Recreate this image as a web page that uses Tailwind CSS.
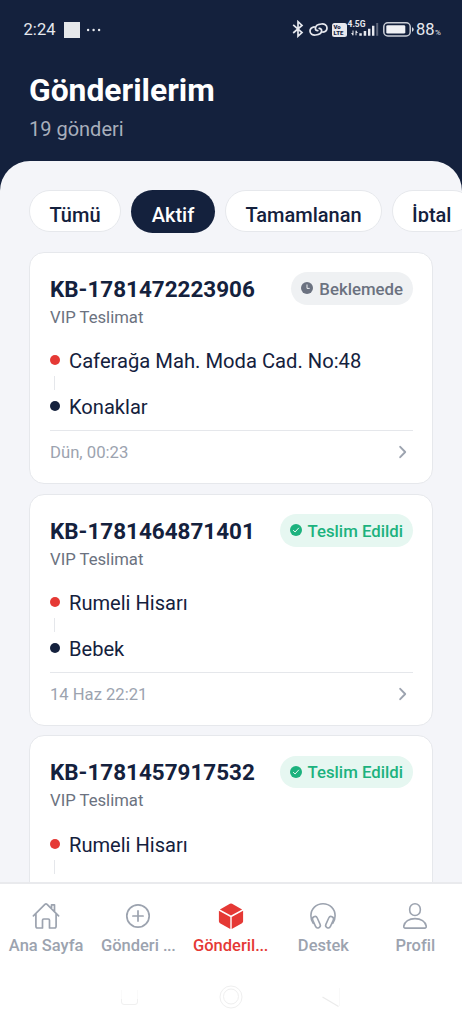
<!DOCTYPE html>
<html lang="tr">
<head>
<meta charset="utf-8">
<title>Gönderilerim</title>
<script src="https://cdn.jsdelivr.net/npm/@tailwindcss/browser@4"></script>
</head>
<body class="w-[462px] h-[1024px] overflow-hidden bg-[#14213d] font-['Roboto',sans-serif] text-[#14213d] flex flex-col">
<svg class="hidden">
  <symbol id="chev" viewBox="0 0 10 14"><path d="M2.200 1.800 7.200 7 2.200 12.200" fill="none" stroke="#9ca3af" stroke-width="1.9" stroke-linecap="round" stroke-linejoin="round"/></symbol>
  <symbol id="check" viewBox="0 0 12 12"><circle cx="6" cy="6" r="6" fill="#1cb27e"/><path d="M3.4 6.4 5.1 8 8.6 4.1" fill="none" stroke="#e6f7f1" stroke-width="1" stroke-linecap="round" stroke-linejoin="round"/></symbol>
</svg>

<header class="h-[161px] shrink-0 flex flex-col">
  <div class="h-[60px] pl-[23.500px] pr-[21px] flex items-center justify-between text-[#e6e8ee]">
    <div class="flex items-center">
      <span class="w-[33px] text-[16.500px] leading-5 tracking-[0.1px] whitespace-nowrap">2:24</span>
      <span class="ml-[7px] size-4 -mt-[1px] bg-[#e6e8ea]"></span>
      <svg class="ml-[6px] -mt-[1px]" width="16" height="4" viewBox="0 0 16 4" fill="#e6e8ee"><circle cx="2.1" cy="2" r="1.2"/><circle cx="7.6" cy="2" r="1.2"/><circle cx="13.1" cy="2" r="1.2"/></svg>
    </div>
    <div class="flex items-center">
      <svg class="-mt-[2px]" width="12" height="18" viewBox="0 0 12 18" fill="none" stroke="#e6e8ee" stroke-width="1.700" stroke-linejoin="miter"><path d="M1.2 4.9 10 12.6 6 16.2V1.7L10 5.4 1.2 13"/></svg>
      <svg class="ml-[5px] -mt-[2px]" width="19" height="15" viewBox="0 0 19 15" fill="none" stroke="#e6e8ee" stroke-width="1.700" stroke-linecap="round"><path d="M5.200 4.800C2.600 5.300 1 7 1 9.100C1 11.900 3.600 13.300 6.600 13C10 12.700 12.600 11 12.600 8.600C12.600 7.400 11.600 6.400 10.200 6.300M13.800 10.200C16.400 9.700 18 8 18 5.900C18 3.100 15.400 1.700 12.400 2C9 2.300 6.400 4 6.400 6.400C6.400 7.600 7.400 8.600 8.800 8.700"/></svg>
      <div class="ml-1 -mt-[1px] w-[15px] h-[14px] rounded-[2.5px] bg-[#e6e8ee] text-[#14213d] text-[6px] leading-[5.500px] font-black flex flex-col justify-center pl-[2px]"><span class="h-[5.500px]">Vo</span><span class="h-[5.500px]">LTE</span></div>
      <div class="ml-[2px] -mt-[2px] w-[31px] h-[16px] relative">
        <span class="absolute -left-px -top-[1px] text-[8.500px] leading-[8px] font-bold">4.5G</span>
        <svg class="absolute inset-0" width="31" height="16" viewBox="0 0 31 16" fill="#e6e8ee"><path d="M4 9.500v4.800M7 9.700v4.600" stroke="#e6e8ee" stroke-width="1"/><path d="M2 12h2v2.500zM7 9.500v2.600h2zM10.300 12.200h2.500v2.600h-2.500zM14.700 10h2.500v4.800h-2.500zM19 7.800h2.400v7h-2.400zM23 4.800h2.400v10h-2.400z"/><path d="M27.200 2h2v12.800h-2z" opacity=".35"/></svg>
      </div>
      <svg class="ml-[3px] -mt-[2px]" width="31" height="15" viewBox="0 0 31 15"><rect x=".8" y=".8" width="26.400" height="13.200" rx="4" fill="none" stroke="#c8ccd5" stroke-width="1.500"/><rect x="3.300" y="3.200" width="19" height="8.400" rx="1.400" fill="#f0f1f5"/><path d="M29 5.300q1.700.2 1.700 2.200T29 9.700z" fill="#d6d9e0"/></svg>
      <span class="ml-[2.500px] text-[16.500px] leading-5 w-[19px]">88</span><span class="text-[8px] mt-[5px] w-[7px] -mr-[1px]">%</span>
    </div>
  </div>
  <h1 class="ml-[29px] mt-[10px] text-[31.800px] leading-[40px] font-bold text-white whitespace-nowrap">Gönderilerim</h1>
  <p class="ml-[29px] mt-[7px] text-[20px] leading-6 text-[#a8afbc] whitespace-nowrap">19 gönderi</p>
</header>

<main class="flex-1 min-h-0 overflow-hidden rounded-t-[30px] bg-[#f4f5f9] pt-[29px]">
  <nav class="h-[43px] pl-[29px] flex gap-[10px] text-[20px] font-medium whitespace-nowrap overflow-hidden">
    <div class="w-[92px] h-[42px] shrink-0 rounded-full bg-white border border-[#e6e8ec] flex justify-center pt-[11px]"><span class="leading-[26px]">Tümü</span></div>
    <div class="w-[84px] h-[43px] shrink-0 rounded-full bg-[#14213d] text-white flex justify-center pt-[12px]"><span class="leading-[26px]">Aktif</span></div>
    <div class="w-[157px] h-[42px] shrink-0 rounded-full bg-white border border-[#e6e8ec] flex justify-center pt-[11px]"><span class="leading-[26px]">Tamamlanan</span></div>
    <div class="w-[82px] h-[42px] shrink-0 rounded-full bg-white border border-[#e6e8ec] flex pl-[19px] pt-[11px]"><span class="h-5 leading-[26px] overflow-hidden">İptal</span></div>
  </nav>

  <section class="mt-[19px] px-[29px] flex flex-col gap-[10px]">
    <article class="h-[232px] shrink-0 rounded-[15px] bg-white border border-[#e6e8ec] pl-5 pr-[19px] pt-[20px]">
      <div class="h-[76px] flex justify-between items-start">
        <div class="pt-[2px] whitespace-nowrap">
          <h2 class="text-[22.450px] leading-[28px] font-bold">KB-1781472223906</h2>
          <p class="mt-[5px] text-[16.700px] leading-5 text-[#6b7280]">VIP Teslimat</p>
        </div>
        <span class="-ml-2 -mt-px h-[33px] rounded-full bg-[#eff1f3] text-[#6b7280] px-[10px] flex items-center gap-[6px] text-[16.800px] font-medium whitespace-nowrap"><svg class="-mt-[2px]" width="12" height="12" viewBox="0 0 12 12"><circle cx="6" cy="6" r="6" fill="#6b7280"/><path d="M6 2.500V6.400H8.700" fill="none" stroke="#eff1f3" stroke-width="1"/></svg><span class="pt-[2px]">Beklemede</span></span>
      </div>
      <div class="h-6 flex items-center gap-[9px] text-[20.200px] whitespace-nowrap"><i class="size-[10px] -mt-[2px] rounded-full bg-[#e53935]"></i>Caferağa Mah. Moda Cad. No:48</div>
      <div class="ml-1 mt-[3px] mb-[5px] h-[14px] w-px bg-[#e5e7eb]"></div>
      <div class="h-6 flex items-center gap-[9px] text-[20.100px] whitespace-nowrap"><i class="size-[10px] -mt-[2px] rounded-full bg-[#14213d]"></i>Konaklar</div>
      <div class="mt-[11px] h-[43px] border-t border-[#e5e7eb] flex items-center justify-between pr-[5px] text-[16.700px] text-[#9ca3af]"><span class="pt-[2px]">Dün, 00:23</span><svg width="10" height="14"><use href="#chev"/></svg></div>
    </article>

    <article class="h-[232px] shrink-0 rounded-[15px] bg-white border border-[#e6e8ec] pl-5 pr-[19px] pt-[20px]">
      <div class="h-[76px] flex justify-between items-start">
        <div class="pt-[2px] whitespace-nowrap">
          <h2 class="text-[22.450px] leading-[28px] font-bold">KB-1781464871401</h2>
          <p class="mt-[5px] text-[16.700px] leading-5 text-[#6b7280]">VIP Teslimat</p>
        </div>
        <span class="-ml-2 -mt-px h-[33px] rounded-full bg-[#e6f7f1] text-[#1cb27e] px-[10px] flex items-center gap-[6px] text-[16.800px] font-medium whitespace-nowrap"><svg class="-mt-[2px]" width="12" height="12"><use href="#check"/></svg><span class="pt-[2px]">Teslim Edildi</span></span>
      </div>
      <div class="h-6 flex items-center gap-[9px] text-[20.100px] whitespace-nowrap"><i class="size-[10px] -mt-[2px] rounded-full bg-[#e53935]"></i>Rumeli Hisarı</div>
      <div class="ml-1 mt-[3px] mb-[5px] h-[14px] w-px bg-[#e5e7eb]"></div>
      <div class="h-6 flex items-center gap-[9px] text-[20.100px] whitespace-nowrap"><i class="size-[10px] -mt-[2px] rounded-full bg-[#14213d]"></i>Bebek</div>
      <div class="mt-[11px] h-[43px] border-t border-[#e5e7eb] flex items-center justify-between pr-[5px] text-[16.600px] text-[#9ca3af]"><span class="pt-[2px]">14 Haz 22:21</span><svg width="10" height="14"><use href="#chev"/></svg></div>
    </article>

    <article class="-mt-px h-[232px] shrink-0 rounded-[15px] bg-white border border-[#e6e8ec] pl-5 pr-[19px] pt-[20px]">
      <div class="h-[77px] flex justify-between items-start">
        <div class="pt-[2px] whitespace-nowrap">
          <h2 class="text-[22.450px] leading-[28px] font-bold">KB-1781457917532</h2>
          <p class="mt-[5px] text-[16.700px] leading-5 text-[#6b7280]">VIP Teslimat</p>
        </div>
        <span class="-ml-2 h-8 rounded-full bg-[#e6f7f1] text-[#1cb27e] px-[10px] flex items-center gap-[6px] text-[16.800px] font-medium whitespace-nowrap"><svg class="-mt-px" width="12" height="12"><use href="#check"/></svg><span class="pt-[2px]">Teslim Edildi</span></span>
      </div>
      <div class="h-6 flex items-center gap-[9px] text-[20.100px] whitespace-nowrap"><i class="size-[10px] -mt-[2px] rounded-full bg-[#e53935]"></i>Rumeli Hisarı</div>
      <div class="ml-1 mt-[3px] mb-[5px] h-[14px] w-px bg-[#e5e7eb]"></div>
    </article>
  </section>
</main>

<footer class="h-[142px] shrink-0 bg-white border-t-2 border-[#e9eaed]">
  <nav class="grid grid-cols-5 text-[16.500px] leading-5 font-medium text-[#9ca3af] text-center whitespace-nowrap">
    <div class="flex flex-col items-center pt-[17px]">
      <svg class="-ml-px" width="30" height="30" viewBox="0 0 30 30" fill="none" stroke="#9ca3af" stroke-width="1.700" stroke-linecap="round" stroke-linejoin="round"><path d="M2.400 14.800 13.900 3.400Q15 2.500 16.100 3.400L27.600 14.800M4.900 12.400V25.300Q4.900 27 6.600 27H11.500V19.200Q11.500 18 12.700 18H17.300Q18.500 18 18.500 19.200V27H23.400Q25.100 27 25.100 25.300V12.400M20.500 7V3.800H23.500V10.200"/></svg>
      <span class="mt-[5px]">Ana Sayfa</span>
    </div>
    <div class="flex flex-col items-center pt-[17px]">
      <svg class="-ml-px" width="30" height="30" viewBox="0 0 30 30" fill="none" stroke="#9ca3af" stroke-width="1.700" stroke-linecap="round"><circle cx="15" cy="15" r="11.200"/><path d="M15 9.900V20.100M9.900 15H20.100"/></svg>
      <span class="mt-[5px] -ml-px">Gönderi <span class="tracking-[-0.500px]">...</span></span>
    </div>
    <div class="flex flex-col items-center pt-[17px] text-[#e53935]">
      <svg width="30" height="30" viewBox="0 0 30 30" fill="#e53935"><path d="M3.900 8.400 13.900 2.800Q15 2.200 16.100 2.800L26.100 8.400 15 14.500ZM2.900 9.700 14.300 16V28L4 22.200Q2.900 21.500 2.900 20.300ZM27.100 9.700 15.700 16V28L26 22.200Q27.100 21.500 27.100 20.300Z"/></svg>
      <span class="mt-[5px] -ml-px">Gönderil<span class="tracking-[-0.300px]">...</span></span>
    </div>
    <div class="flex flex-col items-center pt-[17px]">
      <svg class="-ml-px" width="30" height="30" viewBox="0 0 30 30" fill="none" stroke="#9ca3af" stroke-width="1.600" stroke-linecap="round"><path d="M5.200 22.300C3.500 20 2.900 17.500 2.900 14.700C2.900 8 8.200 2.700 15 2.700S27.100 8 27.100 14.700C27.100 17.500 26.500 20 24.800 22.300"/><rect x="5.900" y="15.200" width="5" height="12" rx="2.500" transform="rotate(-24 8.400 21.200)"/><rect x="19.100" y="15.200" width="5" height="12" rx="2.500" transform="rotate(24 21.600 21.200)"/></svg>
      <span class="mt-[5px]">Destek</span>
    </div>
    <div class="flex flex-col items-center pt-[17px]">
      <svg class="-ml-px" width="30" height="30" viewBox="0 0 30 30" fill="none" stroke="#9ca3af" stroke-width="1.600"><rect x="9.700" y="2.700" width="10.600" height="11.800" rx="5.300"/><path d="M15 17.600C9 17.600 4.600 20.700 3.800 25Q3.500 27.100 5.400 27.100H24.600Q26.500 27.100 26.200 25C25.400 20.700 21 17.600 15 17.600Z"/></svg>
      <span class="mt-[5px] -ml-px">Profil</span>
    </div>
  </nav>
  <div class="mt-[28px] flex justify-between pl-[119px] pr-[119px]">
    <svg width="22" height="26" viewBox="0 0 22 26" fill="none" stroke="#f0f0f0"><path d="M2.500 15V18Q2.500 20.500 5 20.500H16Q18.500 20.500 18.500 18V15"/><path d="M2.500 6V15M18.500 6V15" stroke="#fafafa"/></svg>
    <svg width="26" height="26" viewBox="0 0 26 26" fill="none" stroke="#efefef"><circle cx="13" cy="13" r="11"/><circle cx="13" cy="12.500" r="7.500"/></svg>
    <svg width="22" height="26" viewBox="0 0 22 26" fill="none" stroke="#ebebeb"><path d="M1.500 13 17.500 22.500" stroke-width="1.300"/><path d="M18.500 4V22" stroke="#f9f9f9"/></svg>
  </div>
</footer>
</body>
</html>
